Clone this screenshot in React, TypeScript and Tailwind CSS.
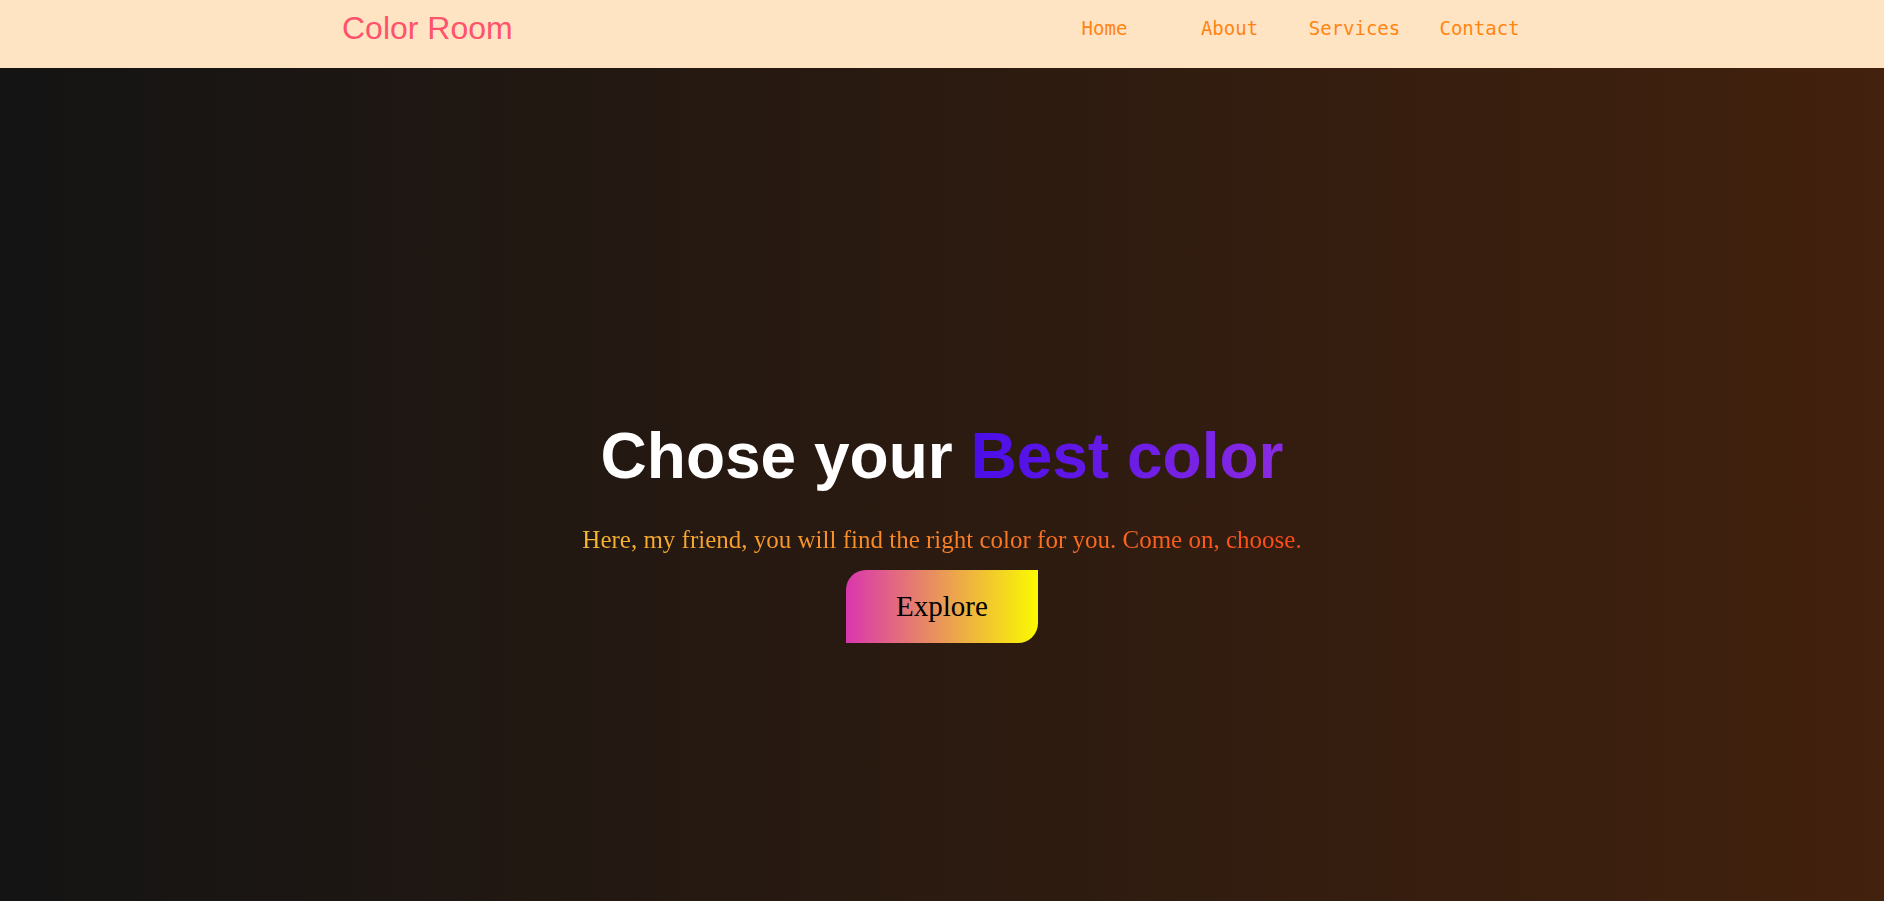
export default function App() {
  const links = ["Home", "About", "Services", "Contact"]

  return (
    <div className="min-h-[901px] w-full">
      <header className="h-[68px] bg-[#ffe4c4]">
        <div className="mx-auto flex h-full w-[1200px] items-center justify-between pb-3">
          <h2 className="font-['Liberation_Sans',Arial,sans-serif] text-[32px] leading-[normal] text-[#ff536b]">
            Color Room
          </h2>
          <nav className="pt-[2px]">
            <ul className="flex">
              {links.map((link) => (
                <li key={link} className="w-[125px] text-center">
                  <a
                    href="#"
                    className="font-['DejaVu_Sans_Mono',monospace] text-[19px] leading-[normal] text-[#ff8412]"
                  >
                    {link}
                  </a>
                </li>
              ))}
            </ul>
          </nav>
        </div>
      </header>

      <section className="flex min-h-[833px] flex-col items-center bg-linear-to-r/srgb from-[#141414] to-[#42210d] pt-[351px]">
        <h1 className="font-['Liberation_Sans',Arial,sans-serif] text-[64px] font-bold leading-[normal] text-white">
          Chose your{" "}
          <span className="bg-linear-to-r/srgb from-[#4a0de8] to-[#8a2be2] bg-clip-text text-transparent">
            Best color
          </span>
        </h1>
        <p className="mt-[33px] bg-linear-to-r/srgb from-[#f7b733] to-[#fc4a1a] bg-clip-text font-['Liberation_Serif','Times_New_Roman',serif] text-[25px] leading-[normal] text-transparent">
          Here, my friend, you will find the right color for you. Come on, choose.
        </p>
        <button className="mt-4 rounded-tl-[20px] rounded-br-[20px] bg-linear-to-r/srgb from-[#da36ae] to-[#fafa00] px-[50px] py-5 font-['Liberation_Serif','Times_New_Roman',serif] text-[29px] leading-[normal] text-black">
          Explore
        </button>
      </section>
    </div>
  )
}
